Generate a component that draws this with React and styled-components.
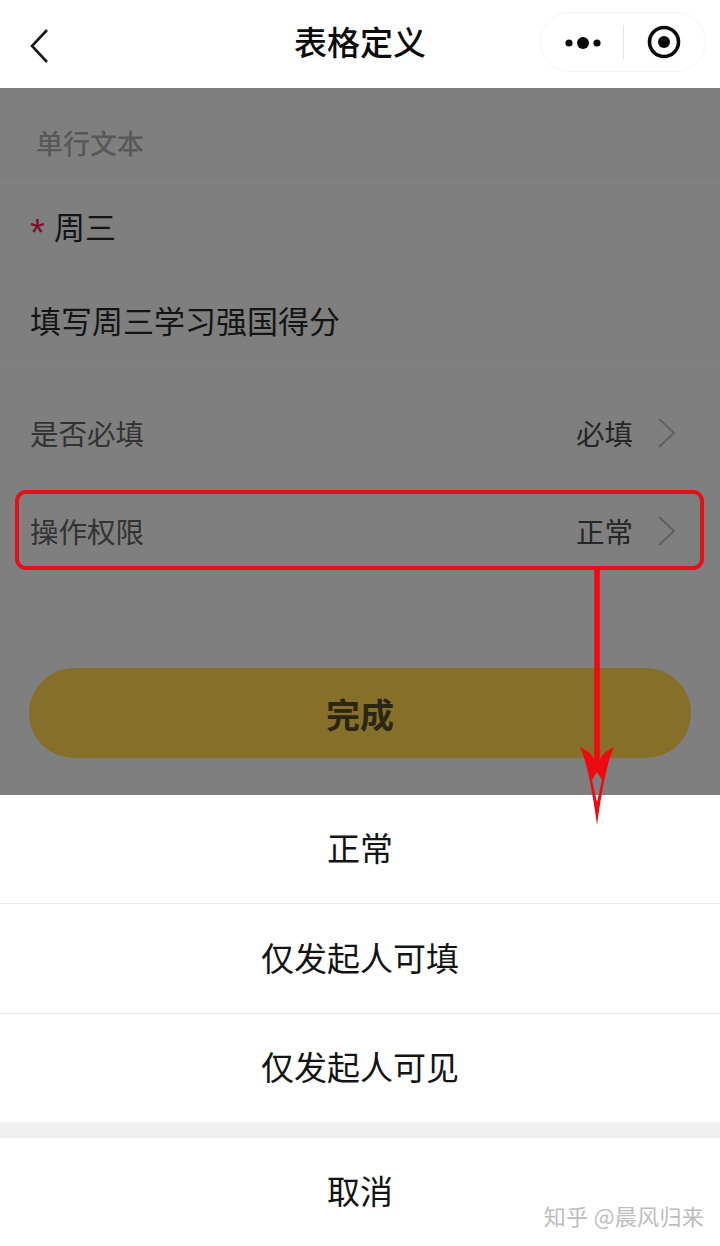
import React from "react";
import styled, { createGlobalStyle } from "styled-components";

const Global = createGlobalStyle`
  html, body { margin: 0; padding: 0; background: #fff; }
  * { box-sizing: border-box; }
`;
const Page = styled.div`
  position: relative; width: 720px; height: 1246px; overflow: hidden;
  display: flex; flex-direction: column; background: #7f7f7f;
  font-family: "Noto Sans CJK SC", "Liberation Sans", sans-serif;
`;
const Header = styled.header`
  height: 88px; flex: none; background: #fff; display: flex; align-items: center;
  justify-content: space-between; padding: 0 14px 0 28px; position: relative;
`;
const Title = styled.h1`
  position: absolute; left: 0; right: 0; top: 17px; margin: 0; text-align: center;
  font-size: 33px; line-height: 48px; font-weight: 500; color: #0c0c0c;
`;
const Capsule = styled.div`
  width: 166px; height: 60px; margin-top: -4px; border-radius: 30px; border: 1px solid #f5f5f5;
  display: flex; align-items: center;
`;
const CapsuleDivider = styled.span`width: 1px; height: 34px; background: #e2e2e2; margin-left: 10px;`;
const Form = styled.main`flex: 1; display: flex; flex-direction: column;`;
const SectionRow = styled.div`
  height: 95px; padding: 15px 36px 0; display: flex; align-items: center;
  font-size: 27px; font-weight: 500; color: #585858;
  border-bottom: 1px solid #838383;
`;
const InputRow = styled.div`
  height: 92px; padding: 0 30px ${p => p.$shift}px; display: flex; align-items: center;
  font-size: 31px; color: #141414; gap: 9px;
  border-bottom: 1px solid #818181;
`;
const Star = styled.span`
  color: #7c0e2c; font-family: "Liberation Sans", sans-serif; font-size: 38px;
  line-height: 1; height: 38px; width: 15px; margin-top: 14px;
`;
const SettingRow = styled.div`
  height: ${p => p.$h}px; padding: ${p => p.$pad}; display: flex; align-items: center;
  justify-content: space-between; font-size: 28.5px; color: #333;
`;
const SettingValue = styled.span`display: flex; align-items: center; gap: 24px; color: #262626; font-size: 28.5px;`;
const Submit = styled.div`
  margin: 83px 29px 0; height: 90px; border-radius: 45px; background: #867029;
  display: flex; align-items: center; justify-content: center;
  font-size: 34px; font-weight: 700; color: #2b2614;
`;
const Sheet = styled.section`flex: none; background: #fff; display: flex; flex-direction: column;`;
const SheetItem = styled.div`
  height: ${p => p.$h}px; display: flex; align-items: center; justify-content: center;
  font-size: 33px; color: #141414; border-top: ${p => (p.$line ? "1px solid #e9e9e9" : "none")};
  padding-bottom: 4px;
`;
const SheetGap = styled.div`height: 16px; background: #efefef;`;
const Highlight = styled.div`
  position: absolute; left: 15px; top: 490px; width: 689px; height: 80px;
  border: 4px solid #e4101a; border-radius: 11px;
`;
const ArrowLayer = styled.svg`position: absolute; left: 570px; top: 566px;`;
const Watermark = styled.div`
  position: absolute; right: 16px; top: 1200px; font-size: 22px; line-height: 30px; color: #bdbdbd;
  letter-spacing: .3px;
`;

const Chevron = () => (
  <svg width="20" height="32" viewBox="0 0 20 32" fill="none" style={{ marginTop: 2 }}>
    <path d="M2 2l15 14L2 30" stroke="#606060" strokeWidth="2" />
  </svg>
);

export default function App() {
  return (
    <Page>
      <Global />
      <Header>
        <svg width="22" height="36" viewBox="0 0 22 36" fill="none" style={{ marginTop: 4 }}>
          <path d="M19 2L4 18l15 16" stroke="#1a1a1a" strokeWidth="2.6" />
        </svg>
        <Title>表格定义</Title>
        <Capsule>
          <svg width="68" height="24" viewBox="0 0 68 24" style={{ marginLeft: 4 }}>
            <circle cx="24" cy="13" r="3.6" fill="#0a0a0a" />
            <circle cx="38" cy="13" r="6" fill="#0a0a0a" />
            <circle cx="52" cy="13" r="3.6" fill="#0a0a0a" />
          </svg>
          <CapsuleDivider />
          <svg width="34" height="34" viewBox="0 0 34 34" style={{ marginLeft: 23 }}>
            <circle cx="17" cy="17" r="14.5" fill="none" stroke="#0a0a0a" strokeWidth="3.6" />
            <circle cx="17" cy="17" r="6" fill="#0a0a0a" />
          </svg>
        </Capsule>
      </Header>
      <Form>
        <SectionRow>单行文本</SectionRow>
        <InputRow $shift={6}><Star>*</Star>周三</InputRow>
        <InputRow $shift={2}>填写周三学习强国得分</InputRow>
        <SettingRow $h={112} $pad="18px 43px 0 30px">
          是否必填
          <SettingValue>必填<Chevron /></SettingValue>
        </SettingRow>
        <SettingRow $h={106} $pad="0 43px 4px 30px">
          操作权限
          <SettingValue>正常<Chevron /></SettingValue>
        </SettingRow>
        <Submit>完成</Submit>
      </Form>
      <Sheet>
        <SheetItem $h={108}>正常</SheetItem>
        <SheetItem $h={110} $line>仅发起人可填</SheetItem>
        <SheetItem $h={109} $line>仅发起人可见</SheetItem>
        <SheetGap />
        <SheetItem $h={108}>取消</SheetItem>
      </Sheet>
      <Highlight />
      <ArrowLayer width="54" height="262" viewBox="0 0 54 262">
        <path d="M27 0v206" stroke="#ef0a12" strokeWidth="5.5" />
        <path fillRule="evenodd" fill="#ef0a12" d="M10 181Q22 186 27 198Q32 186 44 181Q35 200 27 259Q19 200 10 181ZM27 206L22 214L27 236L32 214Z" />
      </ArrowLayer>
      <Watermark>知乎 @晨风归来</Watermark>
    </Page>
  );
}
